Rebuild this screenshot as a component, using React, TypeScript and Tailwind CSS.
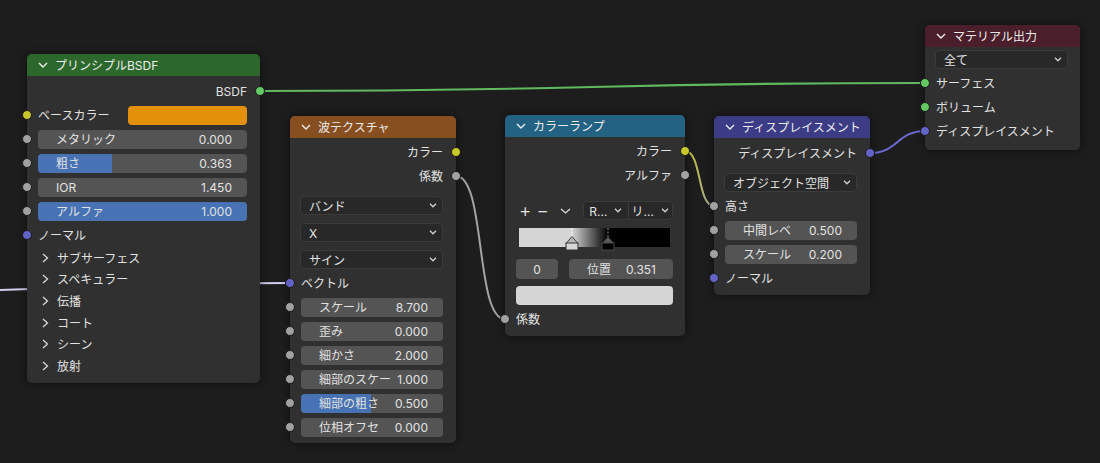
import type { ReactNode } from 'react'

type SocketKind = 'float' | 'color' | 'shader' | 'vector'

const socketColor: Record<SocketKind, string> = {
  float: 'bg-[#a1a1a1]',
  color: 'bg-[#c7c729]',
  shader: 'bg-[#63c763]',
  vector: 'bg-[#6363c7]',
}

// ---------- small glyphs ----------
function Chev({ className = '' }: { className?: string }) {
  return (
    <svg width="10" height="6" viewBox="0 0 10 6" className={className}>
      <polyline points="1,1 5,5 9,1" fill="none" stroke="currentColor" strokeWidth="1.4" />
    </svg>
  )
}

function SmallChev() {
  return (
    <svg width="8" height="5" viewBox="0 0 8 5" className="text-[#d0d0d0]">
      <polyline points="1,0.8 4,3.8 7,0.8" fill="none" stroke="currentColor" strokeWidth="1.3" />
    </svg>
  )
}

function RightChev() {
  return (
    <svg width="7" height="10" viewBox="0 0 7 10" className="text-[#d8d8d8]">
      <polyline points="1,1 5.5,5 1,9" fill="none" stroke="currentColor" strokeWidth="1.3" />
    </svg>
  )
}

// text sits a pixel low in Blender's widgets
function T({ children, className = '' }: { children: ReactNode; className?: string }) {
  return <span className={`relative translate-y-px whitespace-nowrap ${className}`}>{children}</span>
}

// ---------- node building blocks ----------
function Socket({ kind, side }: { kind: SocketKind; side: 'left' | 'right' }) {
  return (
    <span
      className={`absolute top-1/2 size-[10px] -translate-y-1/2 rounded-full border border-[#1b1b1b] ${socketColor[kind]} ${
        side === 'left' ? 'left-[-5px]' : 'right-[-5px]'
      }`}
    />
  )
}

function Row({
  inSock,
  outSock,
  end,
  label,
  children,
}: {
  inSock?: SocketKind
  outSock?: SocketKind
  end?: boolean
  label?: string
  children?: ReactNode
}) {
  return (
    <div className={`relative flex h-6 items-center pl-[11px] pr-[13px] ${end ? 'justify-end' : ''}`}>
      {inSock && <Socket kind={inSock} side="left" />}
      {label && <T>{label}</T>}
      {children}
      {outSock && <Socket kind={outSock} side="right" />}
    </div>
  )
}

function Field({ label, value, fill = 0 }: { label: string; value: string; fill?: number }) {
  return (
    <div className="relative flex h-[19px] flex-1 items-center justify-between overflow-hidden rounded-[4px] bg-[#545454] pl-[18px] pr-[15px]">
      {fill > 0 && (
        <div className="absolute inset-y-0 left-0 bg-[#4772b3]" style={{ width: `${fill * 100}%` }} />
      )}
      <T>{label}</T>
      <T>{value}</T>
    </div>
  )
}

function FieldRow(props: { label: string; value: string; fill?: number }) {
  return (
    <Row inSock="float">
      <Field {...props} />
    </Row>
  )
}

function Dropdown({ label }: { label: string }) {
  return (
    <div className="flex h-[19px] items-center justify-between rounded-[4px] border border-[#3b3b3b] bg-[#282828] pl-2 pr-[5px]">
      <T>{label}</T>
      <SmallChev />
    </div>
  )
}

function Panel({ label }: { label: string }) {
  return (
    <div className="flex h-[21.6px] items-center gap-[8px] pl-[15px]">
      <RightChev />
      <T>{label}</T>
    </div>
  )
}

function Node({
  pos,
  header,
  title,
  children,
}: {
  pos: string
  header: string
  title: string
  children: ReactNode
}) {
  return (
    <div className={`absolute rounded-[5px] bg-[#303030] shadow-[0_0_10px_rgba(0,0,0,0.55)] ${pos}`}>
      <div className={`flex h-[22px] items-center gap-[7px] rounded-t-[5px] pl-[11px] text-[#ececec] ${header}`}>
        <Chev />
        <T>{title}</T>
      </div>
      {children}
    </div>
  )
}

// ---------- color ramp pieces ----------
function Marker({ light }: { light?: boolean }) {
  return (
    <svg width="14" height="23" viewBox="0 0 14 23">
      <line x1="7" y1="0" x2="7" y2="9" stroke={light ? '#ffffff' : '#9a9a9a'} strokeWidth="1" strokeDasharray="2 1.5" />
      <polygon points="1,15.5 7,8.5 13,15.5" fill={light ? '#b8b8b8' : '#5a5a5a'} stroke="#222" strokeWidth="0.8" />
      <rect x="1" y="15" width="12" height="7" fill={light ? '#d6d6d6' : '#000000'} stroke={light ? '#333' : '#4a4a4a'} strokeWidth="1" />
    </svg>
  )
}

function Links() {
  return (
    <svg className="absolute inset-0" width="1100" height="463" viewBox="0 0 1100 463">
      <defs>
        <linearGradient id="yg" gradientUnits="userSpaceOnUse" x1="685" y1="0" x2="714" y2="0">
          <stop offset="0" stopColor="#c7c729" />
          <stop offset="1" stopColor="#a1a1a1" />
        </linearGradient>
      </defs>
      {/* vector link coming from off-screen, behind the BSDF node */}
      <path d="M-120,292 C60,291 140,283 290,283" fill="none" stroke="#cfcfee" strokeWidth="2" />
      <path d="M260,91 C590,91 595,83 925,83" fill="none" stroke="#5fba5f" strokeWidth="2.2" />
      <path d="M456,176 C486,176 475,319 505,319" fill="none" stroke="#a3a3a3" strokeWidth="2" />
      <path d="M685,151 C702,151 697,206 714,206" fill="none" stroke="url(#yg)" strokeWidth="2" />
      <path d="M870,153 C898,153 897,131 925,131" fill="none" stroke="#6a6ad0" strokeWidth="2" />
    </svg>
  )
}

export default function App() {
  return (
    <div className="relative h-[463px] w-[1100px] overflow-hidden bg-[#1d1d1d] font-['Inter','Noto_Sans_CJK_JP',sans-serif] text-[12px] text-[#e2e2e2]">
      <Links />

      {/* Principled BSDF */}
      <Node pos="left-[27px] top-[54px] w-[233px]" header="bg-[#2c682c]" title="プリンシプルBSDF">
        <div className="pb-[6px] pt-[3px]">
          <Row outSock="shader" end label="BSDF" />
          <Row inSock="color">
            <T className="w-[90px]">ベースカラー</T>
            <div className="h-[19px] flex-1 rounded-[4px] bg-[#e3910a]" />
          </Row>
          <FieldRow label="メタリック" value="0.000" />
          <FieldRow label="粗さ" value="0.363" fill={0.355} />
          <FieldRow label="IOR" value="1.450" />
          <FieldRow label="アルファ" value="1.000" fill={1} />
          <Row inSock="vector" label="ノーマル" />
          <Panel label="サブサーフェス" />
          <Panel label="スペキュラー" />
          <Panel label="伝播" />
          <Panel label="コート" />
          <Panel label="シーン" />
          <Panel label="放射" />
        </div>
      </Node>

      {/* Wave texture */}
      <Node pos="left-[290px] top-[116px] w-[166px]" header="bg-[#874f1f]" title="波テクスチャ">
        <div className="pb-[4px] pt-[2px]">
          <Row outSock="color" end label="カラー" />
          <Row outSock="float" end label="係数" />
          <div className="mt-[8px] flex flex-col gap-[8px] pl-[10px] pr-[13px]">
            <Dropdown label="バンド" />
            <Dropdown label="X" />
            <Dropdown label="サイン" />
          </div>
          <div className="mt-[2px]">
            <Row inSock="vector" label="ベクトル" />
          </div>
          <FieldRow label="スケール" value="8.700" />
          <FieldRow label="歪み" value="0.000" />
          <FieldRow label="細かさ" value="2.000" />
          <FieldRow label="細部のスケー" value="1.000" />
          <FieldRow label="細部の粗さ" value="0.500" fill={0.49} />
          <FieldRow label="位相オフセ" value="0.000" />
        </div>
      </Node>

      {/* Color ramp */}
      <Node pos="left-[505px] top-[115px] w-[180px]" header="bg-[#246283]" title="カラーランプ">
        <div className="pb-[5px] pt-[2px]">
          <Row outSock="color" end label="カラー" />
          <Row outSock="float" end label="アルファ" />
          <div className="mt-[14px] flex h-[19px] items-center pl-[14px] pr-[12px]">
            <span className="text-[19px] font-light leading-none text-[#e6e6e6]">+</span>
            <span className="ml-[5px] text-[19px] font-light leading-none text-[#e6e6e6]">−</span>
            <svg width="11" height="6" viewBox="0 0 11 6" className="ml-[11px] text-[#dcdcdc]">
              <polyline points="1,1 5.5,5 10,1" fill="none" stroke="currentColor" strokeWidth="1.3" />
            </svg>
            <div className="ml-auto flex h-[19px] w-[90px] overflow-hidden rounded-[4px] border border-[#3b3b3b] bg-[#282828]">
              <div className="flex flex-1 items-center justify-center gap-[7px] border-r border-[#3b3b3b]">
                <T>R…</T>
                <SmallChev />
              </div>
              <div className="flex flex-1 items-center justify-center gap-[7px]">
                <T>リ…</T>
                <SmallChev />
              </div>
            </div>
          </div>
          <div className="pl-[11px] pr-[12px]">
            <div className="relative mx-[3px] mt-[8px] h-[19px] bg-[linear-gradient(to_right,#d6d6d6_35.1%,#000000_58.9%)]">
              <div className="absolute left-[35.1%] top-0 -translate-x-1/2">
                <Marker light />
              </div>
              <div className="absolute left-[58.9%] top-0 -translate-x-1/2">
                <Marker />
              </div>
            </div>
            <div className="mt-[12px] flex gap-[11px]">
              <div className="flex h-[20px] w-[42px] items-center justify-center rounded-[4px] bg-[#545454]">
                <T>0</T>
              </div>
              <div className="flex h-[20px] flex-1 items-center justify-between rounded-[4px] bg-[#545454] pl-[18px] pr-[17px]">
                <T>位置</T>
                <T>0.351</T>
              </div>
            </div>
            <div className="mt-[7px] h-[19px] rounded-[4px] bg-[#d6d6d6]" />
          </div>
          <div className="mt-[2px]">
            <Row inSock="float" label="係数" />
          </div>
        </div>
      </Node>

      {/* Displacement */}
      <Node pos="left-[714px] top-[116px] w-[156px]" header="bg-[#3c3c86]" title="ディスプレイスメント">
        <div className="pb-[5px] pt-[3px]">
          <Row outSock="vector" end label="ディスプレイスメント" />
          <div className="mt-[8px] pl-[10px] pr-[13px]">
            <Dropdown label="オブジェクト空間" />
          </div>
          <div className="mt-[2px]">
            <Row inSock="float" label="高さ" />
          </div>
          <FieldRow label="中間レベ" value="0.500" />
          <FieldRow label="スケール" value="0.200" />
          <Row inSock="vector" label="ノーマル" />
        </div>
      </Node>

      {/* Material output */}
      <Node pos="left-[925px] top-[25px] w-[155px]" header="bg-[#4a1e2a]" title="マテリアル出力">
        <div className="pb-[7px] pt-[3px]">
          <div className="pl-[10px] pr-[12px]">
            <Dropdown label="全て" />
          </div>
          <div className="mt-[2px]">
            <Row inSock="shader" label="サーフェス" />
            <Row inSock="shader" label="ボリューム" />
            <Row inSock="vector" label="ディスプレイスメント" />
          </div>
        </div>
      </Node>
    </div>
  )
}
